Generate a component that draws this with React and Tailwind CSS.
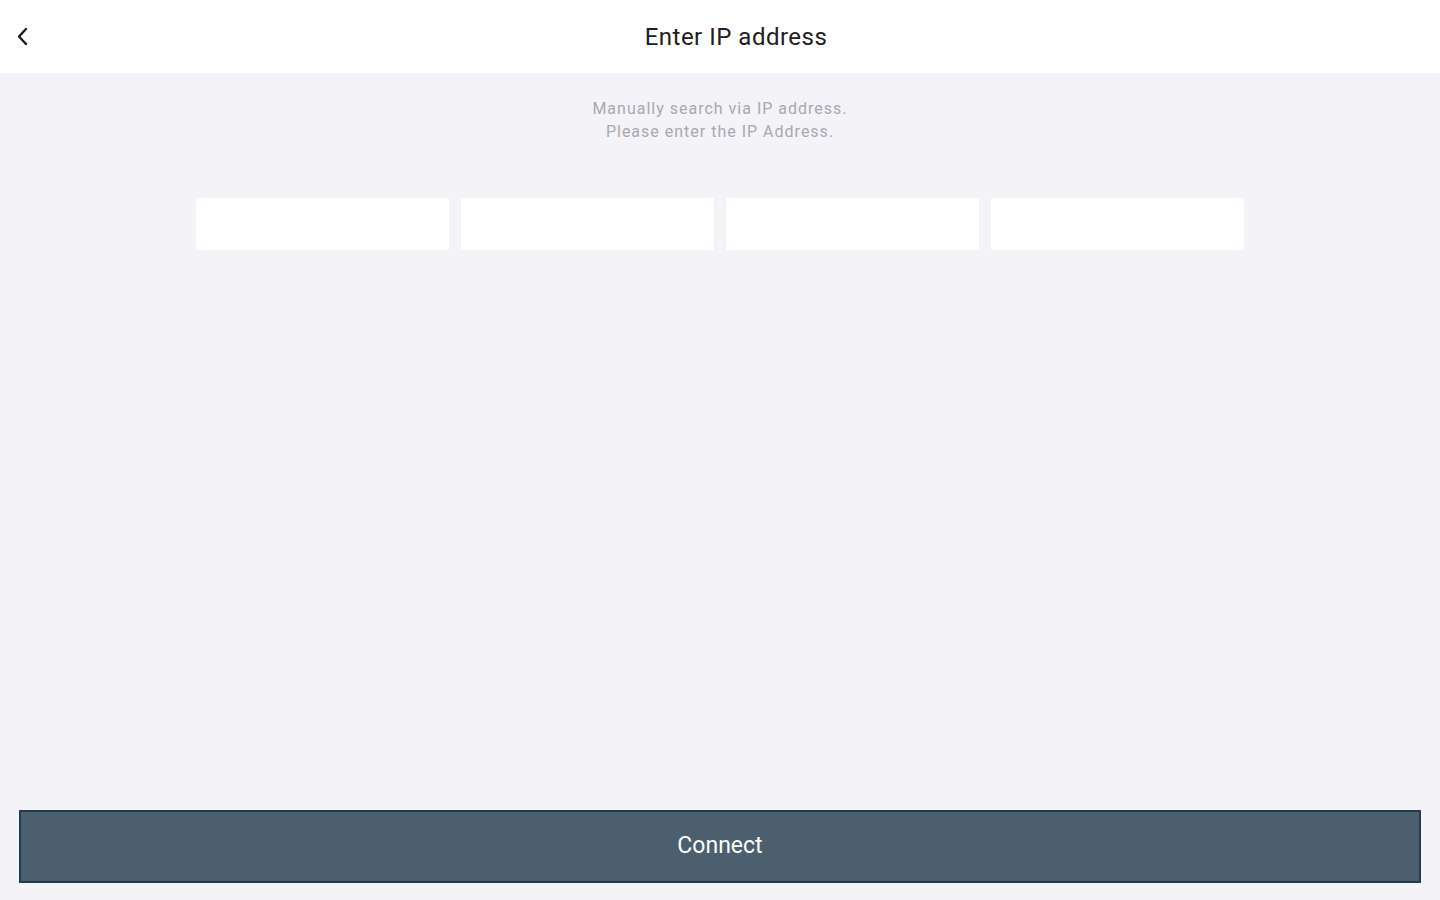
import React, { useState } from "react";

function BackIcon() {
  return (
    <svg width="14" height="20" viewBox="0 0 14 20" fill="none">
      <path d="M10 2 L3 9.5 L10 17" stroke="#1a1a1a" strokeWidth="2.4" strokeLinecap="round" strokeLinejoin="round" />
    </svg>
  );
}

export default function App() {
  const [octets, setOctets] = useState(["", "", "", ""]);

  const setOctet = (i, v) => {
    const next = [...octets];
    next[i] = v.replace(/[^0-9]/g, "").slice(0, 3);
    setOctets(next);
  };

  return (
    <div
      className="w-[1440px] h-[900px] flex flex-col bg-[#f3f3f8]"
      style={{ fontFamily: "Roboto, 'Liberation Sans', sans-serif" }}
    >
      <header className="h-[73px] bg-white flex items-center relative shrink-0">
        <button className="absolute left-[16px] top-[27px] p-0">
          <BackIcon />
        </button>
        <h1 className="w-full text-center pl-[32px] text-[24px] text-[#202020] tracking-[0.5px]">
          Enter IP address
        </h1>
      </header>

      <main className="flex-1 flex flex-col items-center">
        <p className="mt-[24px] text-center text-[16px] leading-[23px] tracking-[1px] text-[#a9a9b0]">
          Manually search via IP address.
          <br />
          Please enter the IP Address.
        </p>

        <div className="mt-[55px] flex gap-[12px]">
          {octets.map((o, i) => (
            <input
              key={i}
              value={o}
              onChange={(e) => setOctet(i, e.target.value)}
              className="w-[253px] h-[52px] bg-white outline-none text-center text-[20px] text-[#222]"
            />
          ))}
        </div>
      </main>

      <div className="px-[19px] pb-[17px] shrink-0">
        <button className="w-full h-[73px] bg-[#4b5f6e] border-2 border-[#1f3c50] text-white text-[23px]">
          Connect
        </button>
      </div>
    </div>
  );
}
